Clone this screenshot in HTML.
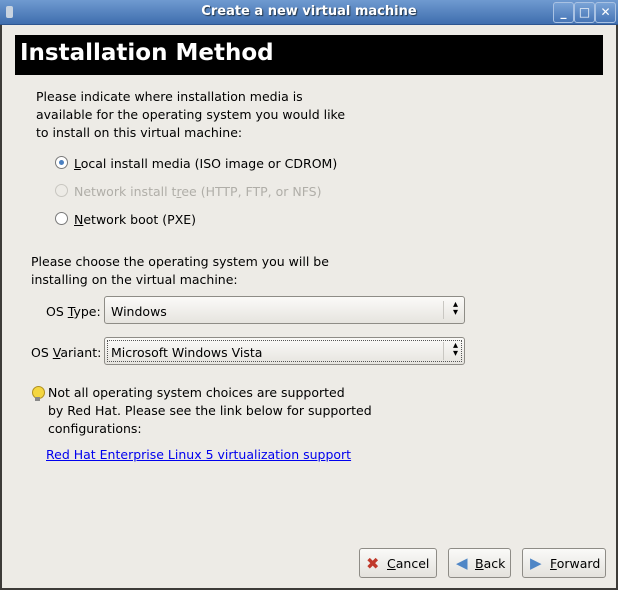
<!DOCTYPE html>
<html><head><style>
body{margin:0;width:618px;height:590px;overflow:hidden;background:#edebe6;font-family:"DejaVu Sans","Liberation Sans",sans-serif;font-size:12.5px;color:#000;position:relative}
.a{position:absolute;white-space:nowrap}
#tb{position:absolute;left:0;top:0;width:618px;height:24px;background:linear-gradient(#6f9ad0,#3f6eae);border-bottom:1px solid #2d5590}
#tb .t{position:absolute;left:0;right:0;top:4px;text-align:center;color:#fff;font-weight:bold;font-size:13px;text-shadow:1px 1px 1px #234}
.wb{position:absolute;top:2px;width:19px;height:19px;border:1px solid #a9c2e3;border-radius:3px;background:linear-gradient(#7aa3d6,#4675b6);color:#fff;font-weight:bold;font-size:12px;text-align:center;line-height:19px}
#hd{position:absolute;left:15px;top:35px;width:588px;height:40px;background:#000;color:#fff;font-weight:bold;font-size:23px}
.rad{position:absolute;width:11px;height:11px;border:1px solid #7a7a7a;border-radius:50%;background:#fff}
.cb{position:absolute;height:28px;border:1px solid #8e8c86;border-radius:3px;background:linear-gradient(#fbfaf8,#e6e4df);box-sizing:border-box}
.btn{position:absolute;top:548px;height:30px;border:1px solid #8e8c86;border-radius:3px;background:linear-gradient(#fafaf8,#e4e2dd);box-sizing:border-box}
u{text-decoration:underline}
</style></head><body>
<div style="position:absolute;left:0;top:25px;width:2px;height:565px;background:#3d3b38"></div>
<div style="position:absolute;right:0;top:25px;width:2px;height:565px;background:#3d3b38"></div>
<div style="position:absolute;left:0;bottom:0;width:618px;height:2px;background:#3d3b38"></div>
<div id="tb"><div class="t">Create a new virtual machine</div>
<div style="position:absolute;left:6px;top:6px;width:7px;height:12px;background:#c8d3e0;border-radius:2px"></div>
<div class="wb" style="left:553px">_</div><div class="wb" style="left:574px">□</div><div class="wb" style="left:595px">✕</div></div>
<div id="hd"><span class="a" style="left:5px;top:5px">Installation Method</span></div>
<div class="a" style="left:36px;top:88px;line-height:18px">Please indicate where installation media is<br>available for the operating system you would like<br>to install on this virtual machine:</div>
<div class="rad" style="left:55px;top:156px"><div style="position:absolute;left:3px;top:3px;width:5px;height:5px;border-radius:50%;background:#4a7fc0"></div></div>
<div class="a" style="left:74px;top:156px"><u>L</u>ocal install media (ISO image or CDROM)</div>
<div class="rad" style="left:55px;top:184px;border-color:#c8c6c0;background:#edebe6"></div>
<div class="a" style="left:74px;top:184px;color:#b0aea8">Network install t<u>r</u>ee (HTTP, FTP, or NFS)</div>
<div class="rad" style="left:55px;top:212px"></div>
<div class="a" style="left:74px;top:212px"><u>N</u>etwork boot (PXE)</div>
<div class="a" style="left:31px;top:253px;line-height:18px">Please choose the operating system you will be<br>installing on the virtual machine:</div>
<div class="a" style="left:46px;top:304px">OS <u>T</u>ype:</div>
<div class="cb" style="left:104px;top:296px;width:361px"><span class="a" style="left:6px;top:7px">Windows</span><span class="a" style="right:6px;top:4px;font-size:10px;line-height:8px;text-align:center">▴<br>▾</span><div style="position:absolute;right:20px;top:4px;width:1px;height:18px;background:#c9c7c2"></div></div>
<div class="a" style="left:31px;top:345px">OS <u>V</u>ariant:</div>
<div class="cb" style="left:104px;top:337px;width:361px"><div style="position:absolute;left:2px;top:2px;right:2px;bottom:2px;border:1px dotted #555"></div><span class="a" style="left:6px;top:7px">Microsoft Windows Vista</span><span class="a" style="right:6px;top:4px;font-size:10px;line-height:8px;text-align:center">▴<br>▾</span><div style="position:absolute;right:20px;top:4px;width:1px;height:18px;background:#c9c7c2"></div></div>
<div style="position:absolute;left:32px;top:386px;width:11px;height:11px;border-radius:50%;background:#f4d640;border:1px solid #b09020"></div>
<div style="position:absolute;left:35px;top:397px;width:5px;height:4px;background:#888"></div>
<div class="a" style="left:48px;top:384px;line-height:18px">Not all operating system choices are supported<br>by Red Hat. Please see the link below for supported<br>configurations:</div>
<div class="a" style="left:46px;top:447px;color:#0000ee;text-decoration:underline">Red Hat Enterprise Linux 5 virtualization support</div>
<div class="btn" style="left:359px;width:78px"><span class="a" style="left:6px;top:5px;color:#c0392b;font-weight:bold;font-size:16px">✖</span><span class="a" style="left:27px;top:7px"><u>C</u>ancel</span></div>
<div class="btn" style="left:448px;width:63px"><span class="a" style="left:7px;top:5px;color:#4f86c6;font-size:15px">◀</span><span class="a" style="left:26px;top:7px"><u>B</u>ack</span></div>
<div class="btn" style="left:522px;width:84px"><span class="a" style="left:7px;top:5px;color:#4f86c6;font-size:15px">▶</span><span class="a" style="left:27px;top:7px"><u>F</u>orward</span></div>
</body></html>
